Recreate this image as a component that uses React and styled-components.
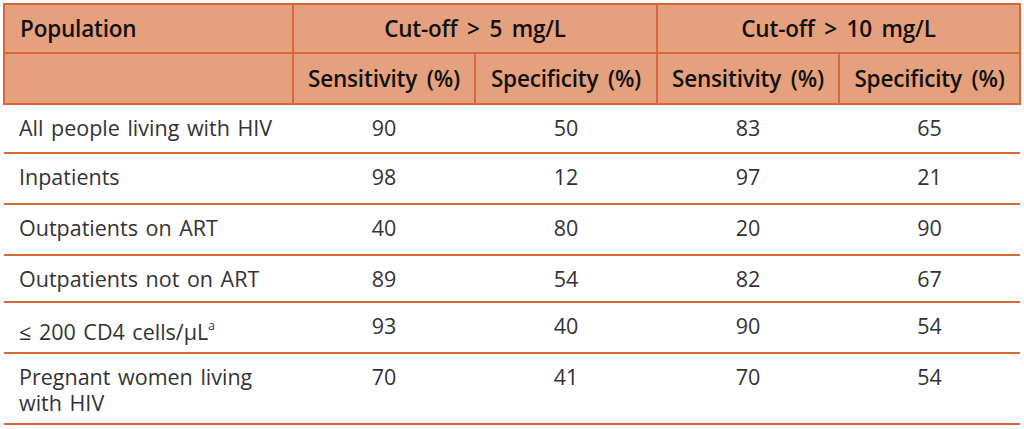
import React from 'react'
import styled, { createGlobalStyle } from 'styled-components'

const HeadBg = '#e5a07e'
const LineColor = '#d8673a'
const fontFamily = '"Open Sans", "Noto Sans", sans-serif'

const GlobalStyle = createGlobalStyle`
  body{
    margin:0;
    background:#ffffff;
  }
`

const Wrapper = styled.div`
  padding:3px 5px 0 3px;
`

const Table = styled.table`
  width:1016px;
  border-collapse:collapse;
  table-layout:fixed;
  font-family:${fontFamily};
  color:#1d1d1d;
`

const HeadCell = styled.th`
  background:${HeadBg};
  border:2px solid ${LineColor};
  height:${props => props.h}px;
  padding:0 0 0 ${props => props.left ? 15 : 0}px;
  text-align:${props => props.left ? 'left' : 'center'};
  font-size:22.5px;
  font-weight:600;
  letter-spacing:-0.2px;
  word-spacing:4px;
  color:#111;
  vertical-align:middle;
  white-space:nowrap;
`

const Row = styled.tr`
  border-bottom:2px solid ${LineColor};
`

const Cell = styled.td`
  height:${props => props.h}px;
  padding:${props => props.first ? '10px 0 0 15px' : '10px 0 0 0'};
  text-align:${props => props.first ? 'left' : 'center'};
  vertical-align:top;
  font-size:21.5px;
  font-weight:400;
  letter-spacing:0;
  word-spacing:2px;
  line-height:26px;
  color:#333;
  box-sizing:border-box;
`

const Sup = styled.sup`
  font-size:12px;
  vertical-align:10px;
`

const rows = [
  { name: 'All people living with HIV', vals: [90, 50, 83, 65], h: 49 },
  { name: 'Inpatients', vals: [98, 12, 97, 21], h: 51 },
  { name: 'Outpatients on ART', vals: [40, 80, 20, 90], h: 51 },
  { name: 'Outpatients not on ART', vals: [89, 54, 82, 67], h: 47 },
  { name: <>≤ 200 CD4 cells/µL<Sup>a</Sup></>, vals: [93, 40, 90, 54], h: 51 },
  { name: 'Pregnant women living with HIV', vals: [70, 41, 70, 54], h: 71 },
]

export default function App(){
  return(
    <Wrapper>
      <GlobalStyle />
      <Table>
        <colgroup>
          <col style={{ width: 289 }} />
          <col style={{ width: 182 }} />
          <col style={{ width: 182 }} />
          <col style={{ width: 182 }} />
          <col style={{ width: 181 }} />
        </colgroup>
        <thead>
          <tr>
            <HeadCell left h={47}>Population</HeadCell>
            <HeadCell colSpan={2} h={47}>Cut-off &gt; 5 mg/L</HeadCell>
            <HeadCell colSpan={2} h={47}>Cut-off &gt; 10 mg/L</HeadCell>
          </tr>
          <tr>
            <HeadCell left h={49}></HeadCell>
            <HeadCell h={49}>Sensitivity (%)</HeadCell>
            <HeadCell h={49}>Specificity (%)</HeadCell>
            <HeadCell h={49}>Sensitivity (%)</HeadCell>
            <HeadCell h={49}>Specificity (%)</HeadCell>
          </tr>
        </thead>
        <tbody>
          {rows.map((row, index) => (
            <Row key={index}>
              <Cell first h={row.h}>{row.name}</Cell>
              {row.vals.map((v, i) => <Cell key={i} h={row.h}>{v}</Cell>)}
            </Row>
          ))}
        </tbody>
      </Table>
    </Wrapper>
  )
}
